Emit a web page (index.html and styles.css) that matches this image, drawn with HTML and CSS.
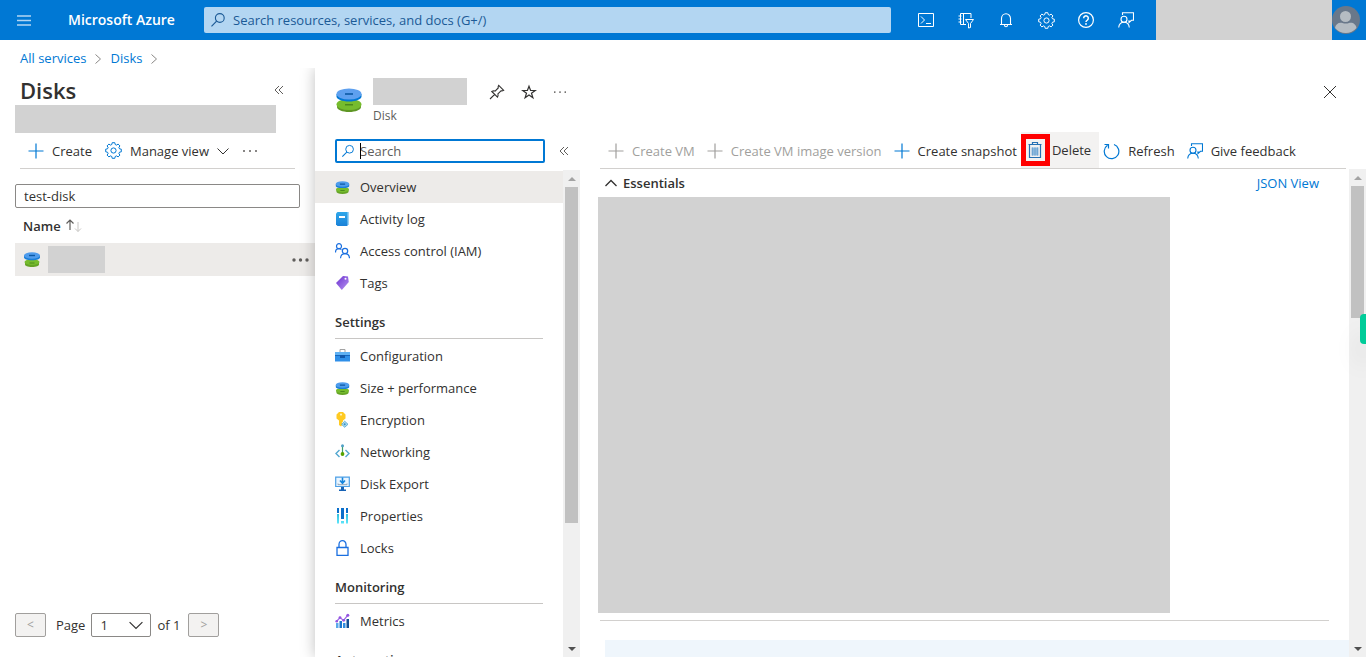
FILE: index.html
```html
<!DOCTYPE html>
<html lang="en">
<head>
<meta charset="utf-8">
<title>Disks - Microsoft Azure</title>
<link rel="stylesheet" href="styles.css">
</head>
<body>
<svg class="sprite" aria-hidden="true">
  <defs>
    <linearGradient id="g-book" x1="0" y1="0" x2="0" y2="1"><stop offset="0" stop-color="#2ea7ea"/><stop offset="1" stop-color="#1a81d8"/></linearGradient>
    <linearGradient id="g-tag" x1="0" y1="0" x2="1" y2="1"><stop offset="0" stop-color="#6b2fd0"/><stop offset="1" stop-color="#b796f0"/></linearGradient>
    <linearGradient id="g-bar" x1="0" y1="0" x2="0" y2="1"><stop offset="0" stop-color="#32bedd"/><stop offset="1" stop-color="#5ee6fb"/></linearGradient>
  </defs>
  <symbol id="plus" viewBox="0 0 16 16"><path d="M8 0.5v15M0.5 8h15" fill="none" stroke="currentColor" stroke-width="1.2"/></symbol>
  <symbol id="lens" viewBox="0 0 16 16"><circle cx="9.8" cy="6" r="4.4" fill="none" stroke="currentColor" stroke-width="1.1"/><path d="M6.6 9.2 1.5 14.3" stroke="currentColor" stroke-width="1.2"/></symbol>
  <symbol id="gear" viewBox="0 0 17 17"><path d="M7.2.7h2.6l.4 1.800 1.300.6 1.600-1 1.800 1.800-1 1.600.6 1.300 1.800.4v2.600l-1.800.4-.6 1.300 1 1.600-1.800 1.800-1.600-1-1.300.6-.4 1.800H7.200l-.4-1.800-1.300-.6-1.600 1-1.800-1.800 1-1.600-.6-1.300-1.800-.4V7.200l1.800-.4.6-1.300-1-1.600 1.800-1.800 1.600 1 1.300-.6z" fill="none" stroke="currentColor" stroke-linejoin="round"/><circle cx="8.500" cy="8.500" r="2.600" fill="none" stroke="currentColor"/></symbol>
  <symbol id="chev-down" viewBox="0 0 12 12"><path d="M.5 3.500 6 9l5.500-5.500" fill="none" stroke="currentColor"/></symbol>
  <symbol id="chev-right" viewBox="0 0 12 12"><path d="M3.500 1.500 8.500 6l-5 4.500" fill="none" stroke="currentColor"/></symbol>
  <symbol id="collapse" viewBox="0 0 10 10"><path d="M5 1 1 5l4 4M9 1 5 5l4 4" fill="none" stroke="currentColor"/></symbol>
  <symbol id="dots" viewBox="0 0 16 4"><circle cx="2" cy="2" r="1"/><circle cx="8" cy="2" r="1"/><circle cx="14" cy="2" r="1"/></symbol>
  <symbol id="feedback" viewBox="0 0 16 16"><path d="M4.500 3V.7h11v7.600h-2l-2.500 2.200V8.300" fill="none" stroke="currentColor" stroke-width="1.100"/><circle cx="6" cy="7.200" r="3" fill="none" stroke="currentColor" stroke-width="1.100"/><path d="M.7 15.500C1 12 3 10.300 6 10.300s5 1.700 5.300 5.200" fill="none" stroke="currentColor" stroke-width="1.100"/></symbol>
  <symbol id="disk" viewBox="0 0 26 24">
    <path d="M1 17v2c0 2.800 5.400 5 12 5s12-2.200 12-5v-2z" fill="#5e9624"/><ellipse cx="13" cy="16.500" rx="12.500" ry="5.500" fill="#76bc2d"/><path d="M9 16h8v1.500H9z" fill="#4b8a1c"/>
    <path d="M.5 6v2.500c0 2.800 5.600 5 12.500 5s12.500-2.200 12.500-5V6z" fill="#0078d4"/><ellipse cx="13" cy="6" rx="12.500" ry="5.500" fill="#5ea0ef"/><path d="M9 5.200h8v1.600H9z" fill="#0c59a4"/>
  </symbol>
  <symbol id="disk-small" viewBox="0 0 16 15">
    <path d="M1 9h14v3.500c0 1.300-2.500 2.500-7 2.500s-7-1.200-7-2.500z" fill="#65a326"/><ellipse cx="8" cy="10" rx="7.500" ry="3" fill="#76bc2d"/><path d="M5.500 10.500h5v1h-5z" fill="#4b8a1c"/>
    <path d="M0 3.500v2C0 7 3 8.200 8 8.200S16 7 16 5.500v-2z" fill="#1a7fd8"/><ellipse cx="8" cy="3.500" rx="8" ry="3.200" fill="#4f9cec"/><path d="M5 2.800h6v1.400H5z" fill="#0c59a4"/>
  </symbol>
</svg>

<header class="topbar">
  <button class="icon-btn menu-btn" aria-label="Show portal menu"><svg width="16" height="11" viewBox="0 0 16 11"><path d="M1 1h14M1 5.500h14M1 10h14" stroke="currentColor" stroke-width="1.300"/></svg></button>
  <a class="brand" href="#">Microsoft Azure</a>
  <label class="global-search"><svg width="16" height="16"><use href="#lens"/></svg><input type="text" placeholder="Search resources, services, and docs (G+/)" aria-label="Search resources, services, and docs"></label>
  <nav class="top-icons" aria-label="Portal tools">
    <button class="icon-btn" aria-label="Cloud Shell"><svg width="16" height="16" viewBox="0 0 16 16"><path d="M.5 1.500h15v13H.500zM3 4.500 6.500 8 3 11.500M8 11.500h5" fill="none" stroke="currentColor"/></svg></button>
    <button class="icon-btn" aria-label="Directories and subscriptions"><svg width="17" height="17" viewBox="0 0 17 17"><path d="M8 12.500H2.500V1.500h10.500V6M5.500 1.500v11M.5 4h3M.5 7h3M.5 10h3M7.500 7.500h8l-3 4v4l-2 .5v-4.500z" fill="none" stroke="currentColor"/></svg></button>
    <button class="icon-btn" aria-label="Notifications"><svg width="16" height="16" viewBox="0 0 16 16"><path d="M2 12.500h12M3.500 12.500V6.500a4.500 4.800 0 0 1 9 0v6M6.500 13a1.500 1.800 0 0 0 3 0" fill="none" stroke="currentColor" stroke-width="1.100"/></svg></button>
    <button class="icon-btn" aria-label="Settings"><svg width="17" height="17"><use href="#gear"/></svg></button>
    <button class="icon-btn" aria-label="Help"><svg width="16" height="16" viewBox="0 0 16 16"><circle cx="8" cy="8" r="7.400" fill="none" stroke="currentColor" stroke-width="1.200"/><path d="M5.700 6.200a2.300 2.300 0 1 1 3.600 1.900C8.300 8.700 8 9 8 10" fill="none" stroke="currentColor" stroke-width="1.500"/><circle cx="8" cy="12" r=".9" fill="currentColor"/></svg></button>
    <button class="icon-btn" aria-label="Feedback"><svg width="16" height="16"><use href="#feedback"/></svg></button>
  </nav>
  <div class="account">
    <span class="redacted account-name"></span>
    <button class="avatar" aria-label="Account"><svg width="28" height="28" viewBox="0 0 28 28"><circle cx="14" cy="14" r="14" fill="#69788a"/><circle cx="13.500" cy="10.500" r="5.500" fill="#b5bcc2"/><path d="M3 22c.5-4 4-6 7.500-5 2 .8 4.500.8 6.500 0 3.500-1 7 1 7.500 5a14 14 0 0 1-21.500 0z" fill="#b5bcc2"/></svg></button>
  </div>
</header>

<nav class="breadcrumb" aria-label="Breadcrumb">
  <a href="#">All services</a><svg width="12" height="12"><use href="#chev-right"/></svg>
  <a href="#">Disks</a><svg width="12" height="12"><use href="#chev-right"/></svg>
</nav>

<main class="workspace">
  <section class="list-pane">
    <div class="list-title"><h1>Disks</h1><button class="plain muted" aria-label="Collapse list"><svg width="10" height="10"><use href="#collapse"/></svg></button></div>
    <div class="redacted directory"></div>
    <div class="list-tools">
      <button class="tool"><svg class="blue" width="16" height="16"><use href="#plus"/></svg>Create</button>
      <button class="tool"><svg class="blue" width="17" height="17"><use href="#gear"/></svg>Manage view<svg width="12" height="12"><use href="#chev-down"/></svg></button>
      <button class="tool" aria-label="More commands"><svg class="more" width="16" height="4"><use href="#dots"/></svg></button>
    </div>
    <input class="filter" type="text" value="test-disk" aria-label="Filter for any field">
    <table class="disk-table">
      <thead><tr><th colspan="3"><span class="sort">Name<svg width="18" height="14" viewBox="0 0 18 14"><path d="M5 11V1M1.500 4.500 5 1l3.500 3.500" fill="none" stroke="#605e5c" stroke-width="1.200"/><path d="M13 3v9.500M10 9.500l3 3 3-3" fill="none" stroke="#c8c6c4"/></svg></span></th></tr></thead>
      <tbody><tr>
        <td class="cell-icon"><svg width="16" height="15"><use href="#disk-small"/></svg></td>
        <td><span class="redacted disk-name"></span></td>
        <td class="cell-more"><button class="plain" aria-label="Row actions"><svg width="18" height="6" viewBox="0 0 18 6"><circle cx="3" cy="3" r="1.700"/><circle cx="9.500" cy="3" r="1.700"/><circle cx="16" cy="3" r="1.700"/></svg></button></td>
      </tr></tbody>
    </table>
    <div class="pager">
      <button class="page-btn" disabled aria-label="Previous page">&lt;</button>
      <label for="page">Page</label>
      <span class="select-wrap"><select id="page"><option>1</option></select><svg width="14" height="14" viewBox="0 0 12 12"><use href="#chev-down"/></svg></span>
      <span>of 1</span>
      <button class="page-btn next" disabled aria-label="Next page">&gt;</button>
    </div>
  </section>

  <section class="blade">
    <header class="blade-head">
      <svg width="26" height="24"><use href="#disk"/></svg>
      <div class="blade-title"><div class="redacted resource-name"></div><div class="kind">Disk</div></div>
      <div class="blade-actions">
        <button class="plain" aria-label="Pin"><svg width="16" height="16" viewBox="0 0 16 16"><path d="M1 15l4.700-4.700M2.800 7.500l5.700 5.700c.7-1.200.8-2.200.4-3.300l3.100-3.100c.9.200 1.700.1 2.700-.5L9.700 1.300c-.6 1-.7 1.800-.5 2.700L6.100 7.100c-1.100-.4-2.100-.3-3.300.4z" fill="none" stroke="currentColor" stroke-width="1.100"/></svg></button>
        <button class="plain" aria-label="Favorite"><svg width="16" height="16" viewBox="0 0 16 16"><path d="M8 2.200l1.600 4.300h4.600l-3.700 2.700 1.400 4.500L8 11l-3.900 2.700 1.400-4.500L1.800 6.500h4.600z" fill="none" stroke="currentColor" stroke-width="1.200"/></svg></button>
        <button class="plain" aria-label="More"><svg class="more" width="14" height="4" viewBox="0 0 16 4"><use href="#dots"/></svg></button>
      </div>
      <button class="plain close" aria-label="Close"><svg width="14" height="14" viewBox="0 0 14 14"><path d="M1 1l12 12M13 1 1 13" stroke="currentColor"/></svg></button>
    </header>

    <div class="blade-body">
      <aside class="menu">
        <div class="menu-search">
          <label class="search-box"><svg width="14" height="14" viewBox="0 0 16 16"><use href="#lens"/></svg><span class="caret"></span><input type="text" placeholder="Search" aria-label="Search menu"></label>
          <button class="plain muted" aria-label="Collapse menu"><svg width="10" height="10"><use href="#collapse"/></svg></button>
        </div>
        <div class="scroller">
          <nav class="menu-list" aria-label="Resource menu">
            <a class="item active" href="#"><svg width="15" height="13" viewBox="0 0 16 15"><use href="#disk-small"/></svg>Overview</a>
            <a class="item" href="#"><svg width="15" height="16" viewBox="0 0 15 16"><path d="M2.500 1H13.500V13.500L12 15H2.500L1 13.500V2.500z" fill="url(#g-book)"/><path d="M12.500 1h1.500v13h-1.500z" fill="#9cd3f5"/><path d="M4 5h6v2H4z" fill="#fff"/></svg>Activity log</a>
            <a class="item" href="#"><svg width="15" height="16" viewBox="0 0 15 16"><g fill="none" stroke="#1a6fe0" stroke-width="1.200"><circle cx="4" cy="3.200" r="2.500"/><path d="M.5 9.500C.5 7 2 5.700 4 5.700c1 0 1.800.3 2.400.9"/><circle cx="10" cy="8" r="2.700"/><path d="M5.500 15.200c.2-2.900 2-4.500 4.500-4.500s4.300 1.600 4.500 4.500"/></g></svg>Access control (IAM)</a>
            <a class="item" href="#"><svg width="15" height="16" viewBox="0 0 15 16"><path d="M1 8 8 1l5 .5.800 5.500-7 8z" fill="url(#g-tag)"/><circle cx="10.500" cy="3.800" r="1" fill="#fff"/></svg>Tags</a>
            <h2>Settings</h2>
            <a class="item" href="#"><svg width="15" height="16" viewBox="0 0 15 16"><path d="M5 4V1.500h5V4" fill="none" stroke="#a3a3a3"/><path d="M0 4h15v9.500H0z" fill="#2f8fe8"/><path d="M0 4h15v3H0z" fill="#5fb1f3"/><path d="M0 7h15v1H0z" fill="#1666bd"/><path d="M5 7h5v3H5z" fill="#1259ab"/></svg>Configuration</a>
            <a class="item" href="#"><svg width="15" height="13" viewBox="0 0 16 15"><use href="#disk-small"/></svg>Size + performance</a>
            <a class="item" href="#"><svg width="15" height="16" viewBox="0 0 15 16"><path d="M4 0h4l2.500 2.500v4L8 8.500v1L6.800 10.800 8 12l-2 2.500-2-1.500V8.500L1.500 6.500v-4z" fill="#ffca22"/><circle cx="6" cy="2.600" r="1.100" fill="#fff3bd"/><path d="M9.700 9.200 13 12.300l-3.300 3-3.200-3z" fill="#a7d8ee" stroke="#4fa3cf" stroke-width=".8"/><circle cx="9.700" cy="12.300" r="1" fill="#3c91c4"/></svg>Encryption</a>
            <a class="item" href="#"><svg width="15" height="16" viewBox="0 0 15 16"><path d="M4.500 6 1 9.500 4.500 13M10.500 6 14 9.500 10.500 13" fill="none" stroke="#52a7d0" stroke-width="1.400"/><path d="M7.500 2v7" stroke="#3f9e6b" stroke-width="1.200"/><circle cx="7.500" cy="1.800" r="1.500" fill="#4fa0c6"/><circle cx="7.500" cy="10" r="1.900" fill="#57a300"/></svg>Networking</a>
            <a class="item" href="#"><svg width="15" height="16" viewBox="0 0 15 16"><path d="M.7 1.200h13.600v9.300H.700z" fill="#e9f5ff" stroke="#4c9fe6" stroke-width="1.200"/><path d="M7.500 1.500v4.500M5 4.500l2.500 2.700L10 4.500" fill="none" stroke="#1584dc" stroke-width="1.600"/><path d="M3 7.500v1.200h9V7.500" fill="none" stroke="#93a4b4"/><path d="M6 11h3v2.500h2V15H4v-1.500h2z" fill="#1762b5"/></svg>Disk Export</a>
            <a class="item" href="#"><svg width="15" height="16" viewBox="0 0 15 16"><path d="M2 0h2v5h-2zM6 0h3v11h-3zM11 0h2v5h-2z" fill="#0b6fcb"/><path d="M2 6h2v9.500h-2zM6 13h3v2.500h-3zM11 6h2v9.500h-2z" fill="url(#g-bar)"/></svg>Properties</a>
            <a class="item" href="#"><svg width="15" height="16" viewBox="0 0 15 16"><path d="M2 7.500h11v7.800H2zM4 7.500V4.500a3.500 3.800 0 0 1 7 0v3" fill="none" stroke="#1a6fe0" stroke-width="1.300"/></svg>Locks</a>
            <h2>Monitoring</h2>
            <a class="item" href="#"><svg width="15" height="16" viewBox="0 0 15 16"><path d="M1 10h2.500v5H1z" fill="#5aa9ea"/><path d="M4.500 8H7v7H4.500z" fill="#1c76cf"/><path d="M8 10h2.500v5H8z" fill="#2f8de0"/><path d="M11.500 6H14v9h-2.500z" fill="#124f94"/><path d="M1.500 8.500 5 4.500l3.500 3L13 2" fill="none" stroke="#a067e8" stroke-width="1.200"/><g fill="#9455e0"><circle cx="1.700" cy="8.300" r="1.300"/><circle cx="5" cy="4.600" r="1.400"/><circle cx="8.700" cy="7.300" r="1.400"/><circle cx="12.800" cy="2.200" r="1.500"/></g></svg>Metrics</a>
            <h2>Automation</h2>
          </nav>
          <div class="scrollbar" aria-hidden="true"><i class="arrow up"></i><i class="thumb menu-thumb"></i><i class="arrow down"></i></div>
        </div>
      </aside>

      <div class="content">
        <div class="commands">
          <button class="tool" disabled><svg width="16" height="16"><use href="#plus"/></svg>Create VM</button>
          <button class="tool" disabled><svg width="16" height="16"><use href="#plus"/></svg>Create VM image version</button>
          <button class="tool"><svg class="blue" width="16" height="16"><use href="#plus"/></svg>Create snapshot</button>
          <button class="tool delete"><span class="marker"><svg width="14" height="18" viewBox="0 0 14 18"><path d="M3.500 6.500h7v8h-7z" fill="#8db8dc"/><path d="M.5 3.500h13M4.500 3.500v-2h5v2M1.500 3.500v13h11v-13" fill="none" stroke="#2470b3" stroke-width="1.200"/><path d="M4.500 6.500v8M7 6.500v8M9.500 6.500v8" stroke="#6fa6d3"/></svg></span>Delete</button>
          <button class="tool"><svg class="blue" width="17" height="17" viewBox="0 0 17 17"><path d="M11 1.500a7.300 7.300 0 1 1-6.500.8M1.500 1.500h4v4" fill="none" stroke="currentColor" stroke-width="1.200"/></svg>Refresh</button>
          <button class="tool"><svg class="blue" width="16" height="16"><use href="#feedback"/></svg>Give feedback</button>
        </div>
        <div class="scroller">
          <div class="overview">
            <div class="essentials-head">
              <button class="plain essentials"><svg width="12" height="12" viewBox="0 0 12 12"><path d="M.5 9 6 3.500 11.500 9" fill="none" stroke="currentColor" stroke-width="1.300"/></svg>Essentials</button>
              <a href="#">JSON View</a>
            </div>
            <div class="redacted essentials-data"></div>
            <hr>
            <div class="banner"></div>
          </div>
          <div class="scrollbar" aria-hidden="true"><i class="arrow up"></i><i class="thumb main-thumb"></i><i class="arrow down"></i></div>
        </div>
      </div>
    </div>
  </section>
</main>
<button class="side-tab" aria-label="Open side panel"></button>
</body>
</html>
```
FILE: styles.css
```css
* { box-sizing: border-box; }
html, body { height: 100%; }
body {
  margin: 0;
  display: flex;
  flex-direction: column;
  overflow: hidden;
  background: #fff;
  color: #323130;
  font: 13px/20px "Open Sans", "Noto Sans", sans-serif;
}
button, input, select { font: inherit; color: inherit; margin: 0; }
button { border: 0; background: none; padding: 0; display: flex; align-items: center; }
a { color: #0078d4; text-decoration: none; }
svg { flex: none; display: block; }
.sprite { position: absolute; width: 0; height: 0; }
.blue { color: #0078d4; }
.muted { color: #605e5c; }
.more { fill: #605e5c; }
.redacted { display: block; background: #d2d2d2; }

.topbar { flex: none; display: flex; align-items: center; height: 40px; background: #0078d4; color: #fff; }
.icon-btn { width: 40px; height: 40px; justify-content: center; }
.menu-btn { width: 48px; opacity: 0.7; }
.brand { width: 156px; padding-left: 20px; color: #fff; font-size: 14px; font-weight: 600; white-space: nowrap; }
.global-search {
  flex: 1;
  display: flex;
  align-items: center;
  gap: 7px;
  height: 26px;
  padding: 0 6px;
  border-radius: 2px;
  background: #b3d6f2;
  color: #1b5a96;
}
.global-search input { flex: 1; border: 0; padding: 0; background: none; outline: 0; }
.global-search input::placeholder { color: #1b5a96; opacity: 1; }
.top-icons { display: flex; margin: 0 10px 0 15px; }
.account { display: flex; align-items: center; }
.account-name { width: 176px; height: 40px; }
.avatar { width: 34px; }

.breadcrumb { flex: none; display: flex; align-items: flex-end; gap: 6px; height: 28px; padding-left: 20px; }
.breadcrumb svg { margin-bottom: 3px; color: #8a8886; }

.workspace { flex: 1; min-height: 0; display: grid; grid-template-columns: 315px 1fr; }

.list-pane { display: flex; flex-direction: column; padding: 7px 0 20px 15px; }
.list-title { display: flex; align-items: center; justify-content: space-between; height: 30px; padding: 0 31px 0 5px; }
h1 { margin: 0; font-size: 22px; line-height: 32px; font-weight: 600; }
.directory { width: 261px; height: 28px; }
.list-tools { display: flex; gap: 13px; height: 36px; margin: 0 20px 15px 5px; padding-left: 8px; border-bottom: 1px solid #d2d0ce; }
.tool { gap: 8px; white-space: nowrap; }
.filter { width: 285px; height: 24px; padding: 0 8px; border: 1px solid #8a8886; border-radius: 2px; }
.disk-table { width: 100%; border-collapse: collapse; }
.disk-table th { height: 35px; padding: 0 8px; text-align: left; font-weight: 600; }
.sort { display: flex; align-items: center; gap: 4px; }
.disk-table td { height: 33px; padding: 0; background: #edebe9; }
.disk-table .cell-icon { width: 33px; padding-left: 9px; }
.disk-name { width: 57px; height: 27px; }
.cell-more { width: 24px; fill: #605e5c; }
.pager { display: flex; align-items: center; margin-top: auto; gap: 6px; }
.page-btn { width: 31px; height: 24px; justify-content: center; border: 1px solid #a19f9d; border-radius: 2px; background: #f3f2f1; color: #a19f9d; font-size: 12px; }
.pager label { padding-left: 4px; }
.next { margin-left: 2px; }
.select-wrap { position: relative; }
.select-wrap select { display: block; width: 60px; height: 24px; padding: 0 8px; border: 1px solid #8a8886; border-radius: 2px; background: #fff; appearance: none; }
.select-wrap svg { position: absolute; right: 8px; top: 5px; pointer-events: none; }

.blade { position: relative; display: flex; flex-direction: column; min-width: 0; min-height: 0; background: #fff; box-shadow: 0 0 14px rgba(0, 0, 0, 0.25); clip-path: inset(0 0 0 -20px); }
.blade-head { flex: none; display: flex; align-items: flex-start; height: 64px; padding: 10px 29px 0 21px; }
.blade-head > svg { margin: 10px 11px 0 0; }
.resource-name { width: 94px; height: 27px; }
.kind { font-size: 12px; line-height: 22px; color: #605e5c; }
.blade-actions { display: flex; gap: 16px; height: 28px; margin-left: 22px; }
.blade-head .close { height: 28px; margin-left: auto; }
.blade-body { flex: 1; min-height: 0; display: grid; grid-template-columns: 265px 1fr; }
.menu, .content { display: flex; flex-direction: column; min-width: 0; min-height: 0; }
.menu-search { flex: none; display: flex; align-items: center; gap: 14px; height: 38px; padding-left: 20px; }
.search-box { position: relative; display: flex; align-items: center; gap: 5px; width: 210px; height: 24px; padding-left: 4px; border: 2px solid #0078d4; border-radius: 2px; color: #0078d4; }
.search-box input { width: 170px; padding: 0; border: 0; outline: 0; color: #323130; }
.search-box input::placeholder { color: #605e5c; opacity: 1; }
.caret { position: absolute; left: 23px; top: 2px; width: 1px; height: 16px; background: #000; }
.scroller { flex: 1; min-height: 0; display: flex; }
.menu-list { flex: 1; overflow: hidden; padding-top: 1px; }
.item { display: flex; align-items: center; gap: 10px; height: 32px; padding-left: 20px; color: #323130; }
.active { background: #edebe9; }
h2 { margin: 0 20px 1px; padding: 13px 0 6px; border-bottom: 1px solid #c8c6c4; font-size: 13px; line-height: 20px; font-weight: 600; }
.scrollbar { flex: none; display: flex; flex-direction: column; align-items: center; width: 17px; background: #f0f0f0; }
.thumb { width: 13px; background: #c1c1c1; }
.menu-thumb { height: 69%; }
.main-thumb { height: 27%; }
.arrow { flex: none; display: flex; align-items: center; justify-content: center; width: 17px; height: 17px; }
.arrow::before { content: ""; border: 4px solid transparent; }
.up::before { border-top: 0; border-bottom-color: #a3a3a3; }
.down { margin-top: auto; }
.down::before { border-bottom: 0; border-top-color: #505050; }

.commands { flex: none; display: flex; height: 37px; margin: 0 20px; padding-left: 8px; border-bottom: 1px solid #d2d0ce; gap: 12px; }
.commands .tool { padding-top: 2px; }
.commands .tool:disabled { color: #a19f9d; }
.commands .delete { gap: 2px; margin: 0 -8px; padding: 0 8px 0 0; background: #f3f2f1; }
.marker { display: flex; align-items: center; justify-content: center; width: 29px; height: 32px; border: 5px solid #f00; }
.overview { flex: 1; min-width: 0; overflow: hidden; padding-left: 20px; }
.essentials-head { display: flex; align-items: center; justify-content: space-between; height: 28px; padding: 0 30px 0 5px; }
.essentials { gap: 6px; font-weight: 600; }
.essentials-data { width: 572px; max-width: 100%; height: 416px; margin-left: -2px; }
hr { margin: 7px 20px 19px 0; border: 0; border-top: 1px solid #d2d0ce; }
.banner { height: 60px; margin-left: 5px; background: #eff6fc; }
.side-tab { position: absolute; right: 0; top: 314px; width: 6px; height: 30px; border-radius: 4px 0 0 4px; background: #00cc99; box-shadow: 0 20px 24px rgba(0, 0, 0, 0.15); }
```
